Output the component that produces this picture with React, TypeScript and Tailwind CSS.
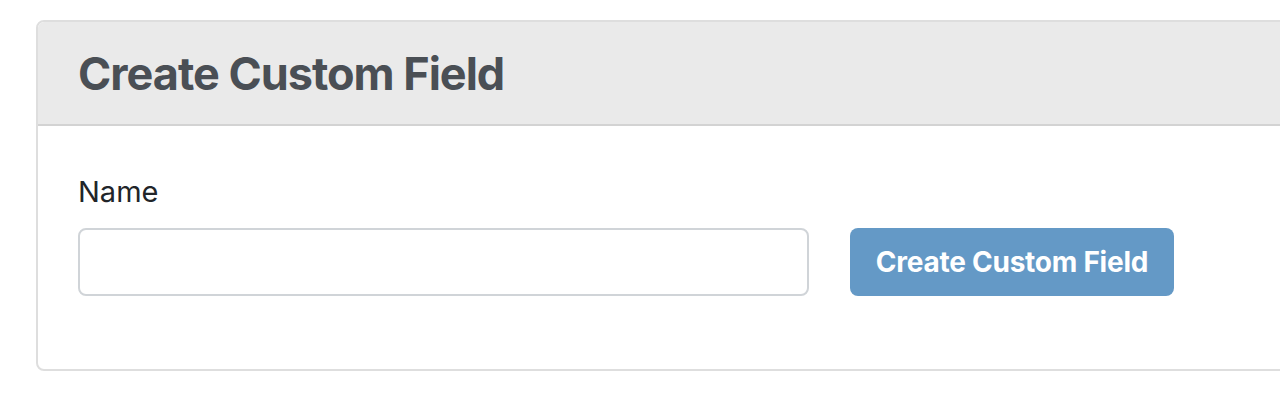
import React from "react";

export default function App() {
  return (
    <div className="w-[1280px] h-[408px] bg-white overflow-hidden pt-[20px] pl-[36px]" style={{ fontFamily: "Inter, 'Noto Sans', sans-serif" }}>
      <div className="w-[1300px] border-2 border-[#dedede] rounded-[8px] bg-white overflow-hidden">
        <div className="h-[104px] bg-[#eaeaea] border-b-2 border-[#d3d3d3] flex items-center pl-[40px]">
          <h3 className="text-[45px] font-bold text-[#4a4f55] leading-none tracking-[-1px]">Create Custom Field</h3>
        </div>
        <div className="pl-[40px] pt-[50px] pb-[73px]">
          <label className="block text-[29px] text-[#212529] leading-[32px] mb-[20px]">Name</label>
          <div className="flex items-center gap-[41px]">
            <input className="w-[731px] h-[68px] border-2 border-[#d0d4d8] rounded-[8px] outline-none px-4" />
            <button className="w-[324px] h-[68px] bg-[#6499c6] rounded-[8px] text-white text-[28px] font-bold tracking-[-0.25px]">Create Custom Field</button>
          </div>
        </div>
      </div>
    </div>
  );
}
